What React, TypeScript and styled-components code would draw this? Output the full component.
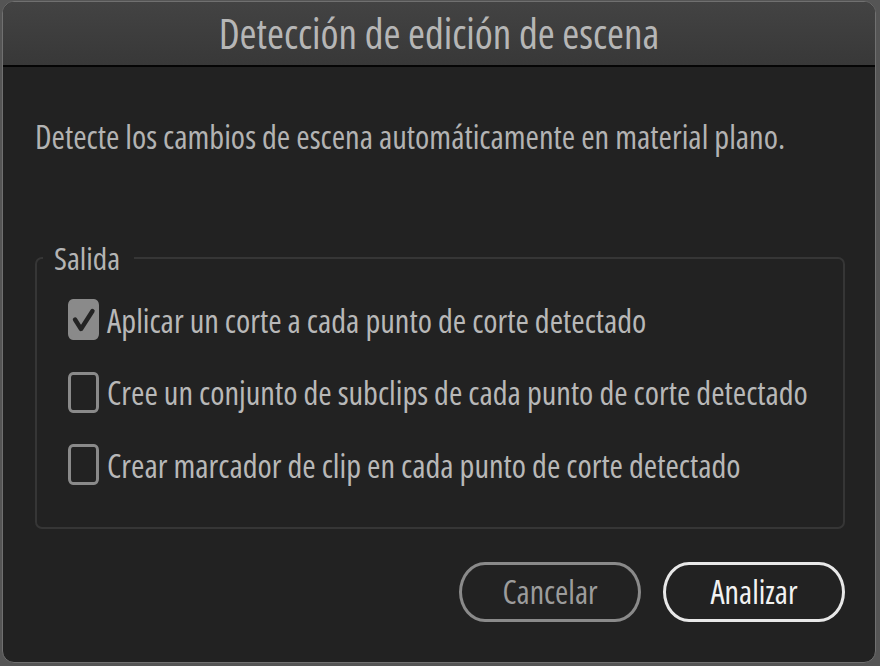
import React, { useState } from "react";
import styled, { createGlobalStyle } from "styled-components";

const GlobalStyle = createGlobalStyle`
  html, body { margin: 0; padding: 0; background: #555555; }
  body {
    font-family: "Open Sans", "Noto Sans", sans-serif;
    font-stretch: condensed;
  }
  * { box-sizing: border-box; }
`;

const Dialog = styled.div`
  margin: 1px 4px 0 2px;
  width: 874px;
  height: 662px;
  border: 1px solid #707070;
  border-radius: 12px;
  background: #222222;
  overflow: hidden;
  display: flex;
  flex-direction: column;
`;

const TitleBar = styled.div`
  height: 65px;
  flex: 0 0 auto;
  background: linear-gradient(#434343, #383838);
  border-bottom: 2px solid #050505;
  display: flex;
  align-items: center;
  justify-content: center;
  color: #b6b6b6;
  font-size: 41px;
  line-height: 63px;
  font-stretch: condensed;
`;

const Body = styled.div`
  flex: 1;
  display: flex;
  flex-direction: column;
  padding: 49px 30px 40px 32px;
`;

const Description = styled.p`
  margin: 0;
  font-size: 32.4px;
  line-height: 40px;
  color: #b3b3b3;
  white-space: nowrap;
`;

const Group = styled.fieldset`
  margin: 84px 0 0 0;
  border: 2px solid #363636;
  border-radius: 7px;
  padding: 23px 0 42px 6px;
  min-width: 0;
`;

const Legend = styled.legend`
  padding: 0 14px 0 11px;
  font-size: 31.5px;
  line-height: 36px;
  color: #b4b4b4;
`;

const Options = styled.div`
  display: flex;
  flex-direction: column;
  gap: 31.5px;
  padding-left: 25px;
`;

const Option = styled.label`
  display: flex;
  align-items: center;
  gap: 8px;
  height: 41px;
  font-size: 32.4px;
  color: #b8b8b8;
  white-space: nowrap;
  cursor: default;
`;

const Box = styled.span<{ $checked: boolean }>`
  width: 31px;
  height: 41px;
  flex: 0 0 auto;
  border: 3px solid #8a8a8a;
  border-radius: 5px / 6px;
  background: ${(p) => (p.$checked ? "#8a8a8a" : "transparent")};
  display: flex;
  align-items: center;
  justify-content: center;
`;

const Buttons = styled.div`
  margin-top: 33px;
  display: flex;
  justify-content: flex-end;
  gap: 22px;
  padding-right: 0;
`;

const Button = styled.button<{ $primary?: boolean }>`
  width: 182px;
  height: 60px;
  border-radius: 26px / 30px;
  background: transparent;
  border: 3px solid ${(p) => (p.$primary ? "#e8e8e8" : "#8a8a8a")};
  color: ${(p) => (p.$primary ? "#f2f2f2" : "#9c9c9c")};
  font-family: "Open Sans", "Noto Sans", sans-serif;
  font-stretch: condensed;
  font-weight: ${(p) => (p.$primary ? 500 : 400)};
  font-size: 32px;
  line-height: 54px;
  padding: 0;
  cursor: default;
`;

const Check = () => (
  <svg width="25" height="35" viewBox="0 0 25 35" aria-hidden>
    <path
      d="M4 17.5 L10 27 L21.5 9"
      fill="none"
      stroke="#232323"
      strokeWidth="4.4"
      strokeLinecap="round"
      strokeLinejoin="round"
    />
  </svg>
);

const options = [
  "Aplicar un corte a cada punto de corte detectado",
  "Cree un conjunto de subclips de cada punto de corte detectado",
  "Crear marcador de clip en cada punto de corte detectado",
];

export default function App() {
  const [checked, setChecked] = useState<boolean[]>([true, false, false]);
  const toggle = (i: number) =>
    setChecked((c) => c.map((v, j) => (j === i ? !v : v)));

  return (
    <>
      <GlobalStyle />
      <Dialog>
        <TitleBar>Detección de edición de escena</TitleBar>
        <Body>
          <Description>
            Detecte los cambios de escena automáticamente en material plano.
          </Description>
          <Group>
            <Legend>Salida</Legend>
            <Options>
              {options.map((text, i) => (
                <Option key={i} onClick={() => toggle(i)}>
                  <Box $checked={checked[i]}>{checked[i] && <Check />}</Box>
                  {text}
                </Option>
              ))}
            </Options>
          </Group>
          <Buttons>
            <Button>Cancelar</Button>
            <Button $primary>Analizar</Button>
          </Buttons>
        </Body>
      </Dialog>
    </>
  );
}
